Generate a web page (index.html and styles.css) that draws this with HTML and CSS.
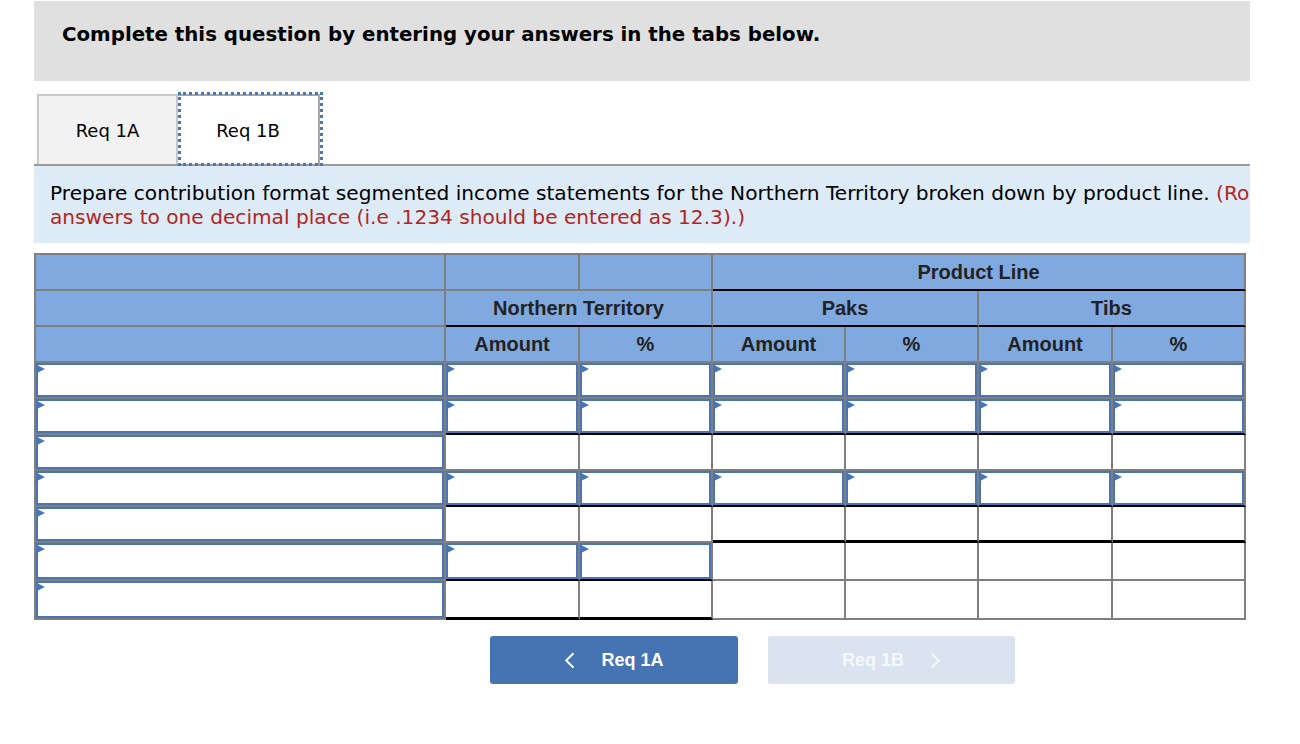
FILE: index.html
```html
<!DOCTYPE html>
<html lang="en">
<head>
<meta charset="utf-8">
<title>Req 1B</title>
<link rel="stylesheet" href="styles.css">
</head>
<body>
<div class="page">
  <div class="banner">
    <h1 class="banner-title">Complete this question by entering your answers in the tabs below.</h1>
  </div>

  <div class="tabs">
    <button class="tab">Req 1A</button>
    <button class="tab tab-active">Req 1B</button>
  </div>

  <div class="instructions">
    <p>Prepare contribution format segmented income statements for the Northern Territory broken down by product line. <span class="note">(Round your percentage</span><br><span class="note">answers to one decimal place (i.e .1234 should be entered as 12.3).)</span></p>
  </div>

  <div class="sheet">
    <!-- header row 1 -->
    <div class="cell head"></div>
    <div class="cell head"></div>
    <div class="cell head"></div>
    <div class="cell head span4 rule">Product Line</div>
    <!-- header row 2 -->
    <div class="cell head"></div>
    <div class="cell head span2 rule">Northern Territory</div>
    <div class="cell head span2 rule">Paks</div>
    <div class="cell head span2 rule">Tibs</div>
    <!-- header row 3 -->
    <div class="cell head"></div>
    <div class="cell head">Amount</div>
    <div class="cell head">%</div>
    <div class="cell head">Amount</div>
    <div class="cell head">%</div>
    <div class="cell head">Amount</div>
    <div class="cell head">%</div>

    <!-- body row 1 -->
    <div class="cell entry"><input type="text"></div>
    <div class="cell entry"><input type="text"></div>
    <div class="cell entry"><input type="text"></div>
    <div class="cell entry"><input type="text"></div>
    <div class="cell entry"><input type="text"></div>
    <div class="cell entry"><input type="text"></div>
    <div class="cell entry"><input type="text"></div>
    <!-- body row 2 -->
    <div class="cell entry"><input type="text"></div>
    <div class="cell entry rule"><input type="text"></div>
    <div class="cell entry rule"><input type="text"></div>
    <div class="cell entry rule"><input type="text"></div>
    <div class="cell entry rule"><input type="text"></div>
    <div class="cell entry rule"><input type="text"></div>
    <div class="cell entry rule"><input type="text"></div>
    <!-- body row 3 -->
    <div class="cell entry"><input type="text"></div>
    <div class="cell"></div>
    <div class="cell"></div>
    <div class="cell"></div>
    <div class="cell"></div>
    <div class="cell"></div>
    <div class="cell"></div>
    <!-- body row 4 -->
    <div class="cell entry"><input type="text"></div>
    <div class="cell entry rule"><input type="text"></div>
    <div class="cell entry rule"><input type="text"></div>
    <div class="cell entry rule"><input type="text"></div>
    <div class="cell entry rule"><input type="text"></div>
    <div class="cell entry rule"><input type="text"></div>
    <div class="cell entry rule"><input type="text"></div>
    <!-- body row 5 -->
    <div class="cell entry"><input type="text"></div>
    <div class="cell"></div>
    <div class="cell"></div>
    <div class="cell rule-thick"></div>
    <div class="cell rule-thick"></div>
    <div class="cell rule-thick"></div>
    <div class="cell rule-thick"></div>
    <!-- body row 6 -->
    <div class="cell entry"><input type="text"></div>
    <div class="cell entry rule"><input type="text"></div>
    <div class="cell entry rule"><input type="text"></div>
    <div class="cell"></div>
    <div class="cell"></div>
    <div class="cell"></div>
    <div class="cell"></div>
    <!-- body row 7 -->
    <div class="cell entry"><input type="text"></div>
    <div class="cell rule-thick"></div>
    <div class="cell rule-thick"></div>
    <div class="cell"></div>
    <div class="cell"></div>
    <div class="cell"></div>
    <div class="cell"></div>
  </div>

  <div class="nav">
    <button class="nav-btn">
      <svg class="chev" width="11" height="17" viewBox="0 0 11 17" aria-hidden="true"><path d="M9.5 1.2 L2.2 8.5 L9.5 15.8" fill="none" stroke="currentColor" stroke-width="2"/></svg>
      <span>Req 1A</span>
    </button>
    <button class="nav-btn nav-btn-disabled">
      <span>Req 1B</span>
      <svg class="chev" width="11" height="17" viewBox="0 0 11 17" aria-hidden="true"><path d="M1.5 1.2 L8.8 8.5 L1.5 15.8" fill="none" stroke="currentColor" stroke-width="2"/></svg>
    </button>
  </div>
</div>
</body>
</html>
```

FILE: styles.css
```css
* {
  box-sizing: border-box;
}

body {
  margin: 0;
  background: #ffffff;
  color: #000000;
  font-family: "DejaVu Sans", Verdana, sans-serif;
}

.page {
  width: 1216px;
  margin-left: 34px;
  padding-top: 1px;
}

/* banner */
.banner {
  height: 80px;
  background: #e0e0e0;
  padding: 22px 0 0 28px;
}

.banner-title {
  margin: 0;
  font-size: 19.8px;
  line-height: 23px;
  font-weight: bold;
}

/* tabs */
.tabs {
  display: flex;
  height: 85px;
  padding: 13px 0 0 3px;
  border-bottom: 2px solid #9a9a9a;
}

.tab {
  width: 141px;
  height: 70px;
  margin: 0;
  padding: 0;
  background: #f2f2f2;
  border: 2px solid #c8c8c8;
  border-bottom: 0;
  font-family: "DejaVu Sans", Verdana, sans-serif;
  font-size: 18px;
  color: #000000;
}

.tab-active {
  position: relative;
  width: 142px;
  background: #ffffff;
  border-color: #a8a8a8;
  border-left: 0;
}

.tab-active::after {
  content: "";
  position: absolute;
  top: -4px;
  left: 0;
  right: -5px;
  bottom: -2px;
  border: 3px dotted #4a76b4;
}

/* instructions */
.instructions {
  height: 77px;
  padding: 15px 0 0 16px;
  background: #ddebf7;
  overflow: hidden;
  white-space: nowrap;
  font-size: 20.15px;
  line-height: 24px;
}

.instructions p {
  margin: 0;
}

.note {
  color: #b0261f;
}

/* sheet */
.sheet {
  display: grid;
  width: 1212px;
  margin-top: 10px;
  grid-template-columns: 410px 134px 133px 133px 133px 134px 133px;
  grid-template-rows: repeat(8, 36px) 38px 39px;
  border-top: 2px solid #7f7f7f;
  border-left: 2px solid #7f7f7f;
  font-family: "Liberation Sans", Arial, sans-serif;
}

.cell {
  position: relative;
  border-right: 2px solid #7f7f7f;
  border-bottom: 2px solid #7f7f7f;
  background: #ffffff;
}

.head {
  display: flex;
  align-items: center;
  justify-content: center;
  background: #80aadf;
  color: #222222;
  font-size: 20px;
  font-weight: bold;
}

.span2 {
  grid-column: span 2;
}

.span4 {
  grid-column: span 4;
}

.rule {
  border-bottom-color: #000000;
}

.rule-thick {
  border-bottom: 3px solid #000000;
}

.entry input {
  display: block;
  width: 100%;
  height: 100%;
  margin: 0;
  padding: 0 6px 0 12px;
  border: 2px solid #4a75b5;
  border-radius: 0;
  background: #ffffff;
  font-family: "Liberation Sans", Arial, sans-serif;
  font-size: 16px;
  outline: none;
}

.entry::before {
  content: "";
  position: absolute;
  top: 2px;
  left: 1px;
  z-index: 1;
  border-left: 8px solid #4a75b5;
  border-top: 4.5px solid transparent;
  border-bottom: 4.5px solid transparent;
}

/* navigation */
.nav {
  display: flex;
  gap: 30px;
  margin-top: 16px;
  padding-left: 456px;
}

.nav-btn {
  display: flex;
  align-items: center;
  justify-content: center;
  gap: 26px;
  width: 248px;
  height: 48px;
  margin: 0;
  padding: 0;
  border: 0;
  border-radius: 3px;
  background: #4673b1;
  color: #ffffff;
  font-family: "Liberation Sans", Arial, sans-serif;
  font-size: 18px;
  font-weight: bold;
}

.nav-btn-disabled {
  width: 247px;
  background: #dae3ef;
  color: #f6f8fb;
}

.chev {
  display: block;
}
```
